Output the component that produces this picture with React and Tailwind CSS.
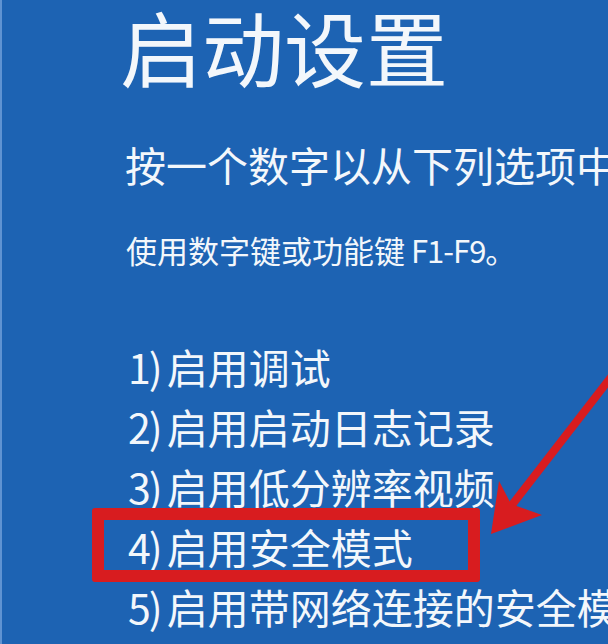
import React from "react";

const items = [
  ["1)", "启用调试"],
  ["2)", "启用启动日志记录"],
  ["3)", "启用低分辨率视频"],
  ["4)", "启用安全模式"],
  ["5)", "启用带网络连接的安全模式"],
];

const App = () => {
  return (
    <div className="relative h-[644px] w-[608px] overflow-hidden whitespace-nowrap border-l-2 border-[#5f93d2] bg-[#1d63b3] font-['Noto_Sans_CJK_SC','Noto_Sans',sans-serif] text-[#f3f7fb]">
      <div className="flex flex-col pl-[116px] pt-[5px]">
        {/* Title */}
        <h1 className="ml-[2px] text-[82px] leading-[82px] font-normal">启动设置</h1>

        {/* Prompt */}
        <p className="ml-[7px] mt-[57px] text-[41px] leading-[41px]">
          按一个数字以从下列选项中进行选择：
        </p>
        <p className="ml-[8px] mt-[49px] text-[31px] leading-[31px]">
          使用数字键或功能键<span className="tracking-[-1px]"> F1-F9</span>。
        </p>

        {/* Options */}
        <ul className="ml-[10px] mt-[71px]">
          {items.map(([num, label], i) => (
            <li key={num} className="relative text-[41px] leading-[60px] [word-spacing:-3px]">
              {i === 3 && (
                <span className="absolute left-[-36px] top-[-8px] h-[74px] w-[388px] rounded-[3px] border-[12px] border-[#d81c1f]" />
              )}
              <span className="tracking-[-2px]">{num}</span> {label}
            </li>
          ))}
        </ul>
      </div>

      {/* Red arrow annotation */}
      <svg
        className="pointer-events-none absolute left-0 top-0"
        width="608"
        height="644"
        viewBox="0 0 608 644"
      >
        <line
          x1="616"
          y1="368"
          x2="503"
          y2="514"
          stroke="#d81c1f"
          strokeWidth="8"
          strokeLinecap="round"
        />
        <polygon points="489,534 497,481 509,504 540,515" fill="#d81c1f" />
      </svg>
    </div>
  );
};

export default App;
